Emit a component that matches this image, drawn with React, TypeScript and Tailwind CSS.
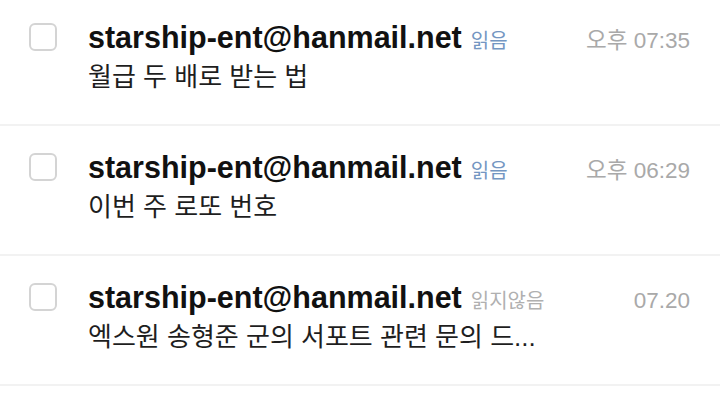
import React from "react";

type Mail = { from: string; status: string; read: boolean; time: string; subject: string };

const mails: Mail[] = [
  { from: "starship-ent@hanmail.net", status: "읽음", read: true, time: "오후 07:35", subject: "월급 두 배로 받는 법" },
  { from: "starship-ent@hanmail.net", status: "읽음", read: true, time: "오후 06:29", subject: "이번 주 로또 번호" },
  { from: "starship-ent@hanmail.net", status: "읽지않음", read: false, time: "07.20", subject: "엑스원 송형준 군의 서포트 관련 문의 드..." },
];

export default function App() {
  return (
    <div
      className="w-[720px] h-[396px] bg-white overflow-hidden"
      style={{ fontFamily: '"Liberation Sans", "Noto Sans CJK KR", sans-serif' }}
    >
      <div className="-mt-[4px]">
        {mails.map((m, i) => (
          <div key={i} className="h-[130px] border-b-2 border-[#f2f2f2] flex pl-[29px] pr-[30px] pt-[27px]">
            <div className="w-[28px] h-[28px] rounded-[6px] border-2 border-[#d4d4d4] shrink-0" />
            <div className="ml-[31px] flex-1 min-w-0">
              <div className="flex items-baseline h-[30px] -mt-[1px]">
                <span className="text-[30.5px] leading-[30px] font-bold text-[#111]">{m.from}</span>
                <span
                  className={
                    "ml-[9px] text-[20px] leading-[20px] " + (m.read ? "text-[#7396c2]" : "text-[#b0b0b0]")
                  }
                >
                  {m.status}
                </span>
                <span className="ml-auto text-[22.5px] leading-[24px] text-[#a9a9a9]">{m.time}</span>
              </div>
              <div className="mt-[8px] text-[26px] leading-[34px] text-[#1e1e1e] whitespace-nowrap">{m.subject}</div>
            </div>
          </div>
        ))}
      </div>
    </div>
  );
}
